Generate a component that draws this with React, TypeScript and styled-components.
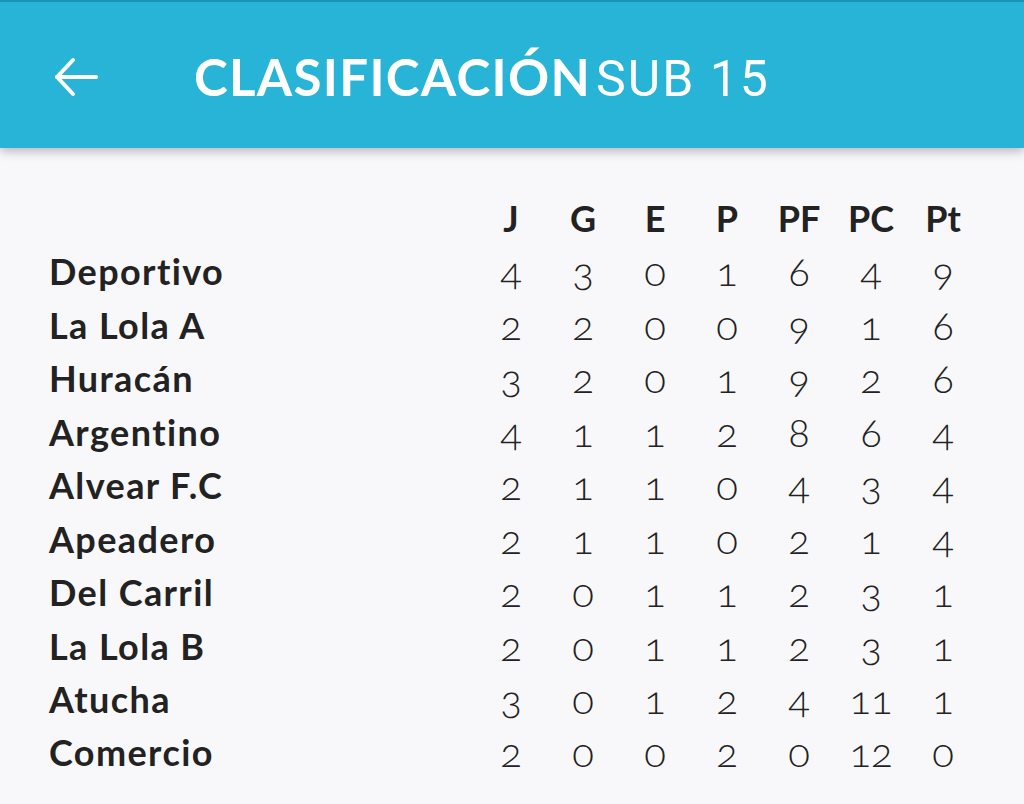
import React from "react";
import styled, { createGlobalStyle } from "styled-components";

const GlobalStyle = createGlobalStyle`
  html, body { margin: 0; padding: 0; }
  body {
    background: #f8f8fa;
    font-family: "Lato", "Noto Sans", sans-serif;
    color: #222;
  }
`;

const Page = styled.div`
  width: 1024px;
  height: 804px;
  overflow: hidden;
  background: #f8f8fa;
`;

const AppBar = styled.header`
  position: relative;
  z-index: 1;
  height: 148px;
  border-top: 2px solid #1996b1;
  background: #27b4d6;
  box-shadow: 0 3px 10px rgba(0, 0, 0, 0.28);
  display: flex;
  align-items: center;
  padding: 4px 0 0 54px;
  box-sizing: border-box;
`;

const BackIcon = styled.svg`
  width: 44px;
  height: 40px;
  flex: none;
`;

const Title = styled.h1`
  margin: 0 0 0 96px;
  display: flex;
  align-items: baseline;
  gap: 5px;
  color: #fff;
  font-weight: normal;
`;

const TitleMain = styled.span`
  font-family: "Lato", sans-serif;
  font-weight: 700;
  font-size: 51px;
  letter-spacing: 1.3px;
`;

const TitleSub = styled.span`
  font-family: "Roboto", sans-serif;
  font-weight: 400;
  font-size: 50px;
  letter-spacing: 2px;
`;

const Table = styled.div`
  display: grid;
  grid-template-columns: 426px repeat(7, 72px);
  grid-auto-rows: 53.44px;
  padding: 44px 0 0 49px;
`;

const HeadCell = styled.div`
  font-family: "Lato", sans-serif;
  font-weight: 700;
  font-size: 36px;
  line-height: 53.44px;
  text-align: center;
  color: #222;
`;

const NameCell = styled.div`
  font-family: "Lato", sans-serif;
  font-weight: 700;
  font-size: 36px;
  letter-spacing: 1.4px;
  line-height: 53.44px;
  color: #222;
  white-space: nowrap;
`;

const NumCell = styled.div`
  font-family: "Lato", sans-serif;
  font-weight: 300;
  font-size: 40px;
  line-height: 53.44px;
  text-align: center;
  color: #222;
  font-variant-numeric: oldstyle-nums;
  font-feature-settings: "onum" 1;
`;

const columns = ["J", "G", "E", "P", "PF", "PC", "Pt"];

const rows: [string, number[]][] = [
  ["Deportivo", [4, 3, 0, 1, 6, 4, 9]],
  ["La Lola A", [2, 2, 0, 0, 9, 1, 6]],
  ["Huracán", [3, 2, 0, 1, 9, 2, 6]],
  ["Argentino", [4, 1, 1, 2, 8, 6, 4]],
  ["Alvear F.C", [2, 1, 1, 0, 4, 3, 4]],
  ["Apeadero", [2, 1, 1, 0, 2, 1, 4]],
  ["Del Carril", [2, 0, 1, 1, 2, 3, 1]],
  ["La Lola B", [2, 0, 1, 1, 2, 3, 1]],
  ["Atucha", [3, 0, 1, 2, 4, 11, 1]],
  ["Comercio", [2, 0, 0, 2, 0, 12, 0]],
];

export default function App() {
  return (
    <Page>
      <GlobalStyle />
      <AppBar>
        <BackIcon viewBox="0 0 44 40" fill="none" stroke="#fff" strokeWidth={4} strokeLinecap="round" strokeLinejoin="round">
          <path d="M42 20H3" />
          <path d="M19 3L3 20L19 37" />
        </BackIcon>
        <Title>
          <TitleMain>CLASIFICACIÓN</TitleMain>
          <TitleSub>SUB 15</TitleSub>
        </Title>
      </AppBar>
      <Table>
        <div />
        {columns.map((c) => (
          <HeadCell key={c}>{c}</HeadCell>
        ))}
        {rows.map(([name, vals]) => (
          <React.Fragment key={name}>
            <NameCell>{name}</NameCell>
            {vals.map((v, i) => (
              <NumCell key={i}>{v}</NumCell>
            ))}
          </React.Fragment>
        ))}
      </Table>
    </Page>
  );
}
